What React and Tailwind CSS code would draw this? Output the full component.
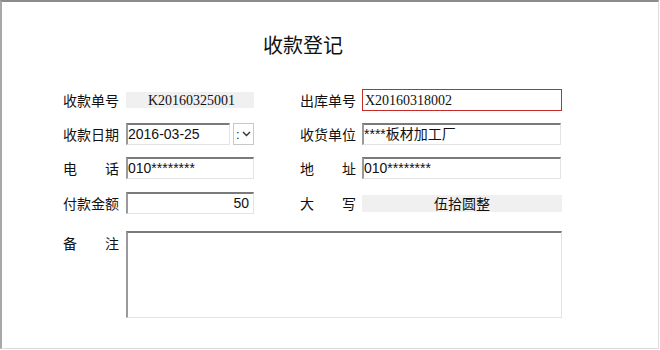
const cjk = { fontFamily: '"Noto Sans CJK SC", "Liberation Sans", sans-serif' }
const serif = { fontFamily: '"Liberation Serif", "Noto Sans CJK SC", serif' }
const sans = { fontFamily: '"Liberation Sans", "Noto Sans CJK SC", sans-serif' }

const sunken = 'border-t-2 border-l-2 border-r border-b border-t-[#7a7a7a] border-l-[#9a9a9a] border-r-[#e3e3e3] border-b-[#e3e3e3] bg-white'

function Label({ children, spread }) {
    return (
        <div className="w-[56px] h-[22px] flex items-center text-[14px] text-[#111] shrink-0" style={cjk}>
            {spread ? (
                <div className="w-full flex justify-between">
                    <span>{children[0]}</span>
                    <span>{children[1]}</span>
                </div>
            ) : children}
        </div>
    )
}

function Input({ value, className = '', right, font = sans }) {
    return (
        <div className={`h-[22px] flex items-center text-[14px] text-[#111] ${sunken} ${right ? 'justify-end pr-[4px]' : ''} ${className}`} style={font}>
            {value}
        </div>
    )
}

export default function App() {
    return (
        <div className="w-[660px] h-[350px] bg-white overflow-hidden">
            <div className="w-[659px] h-[349px] border-t-2 border-l-2 border-t-[#8c8c8c] border-l-[#a8a8a8] border-r border-b border-r-[#dcdcdc] border-b-[#dcdcdc]">
                <div className="pt-[29px] pl-[261px]">
                    <div className="h-[28px] text-[20px] leading-[28px] text-[#111]" style={cjk}>
                        收款登记
                    </div>
                </div>

                <div className="pl-[61px] pt-[30px] flex flex-col">
                    {/* row 1 */}
                    <div className="flex items-center">
                        <Label>收款单号</Label>
                        <div className="ml-[7px] w-[128px] h-[16px] bg-[#f0f0f0] flex items-center pl-[22px] text-[14px] text-[#111]" style={serif}>
                            K20160325001
                        </div>
                        <div className="ml-[46px]"><Label>出库单号</Label></div>
                        <div className="ml-[6px] w-[200px] h-[22px] border border-[#c42b2b] bg-white flex items-center pl-[2px] text-[14px] text-[#111]" style={serif}>
                            X20160318002
                        </div>
                    </div>

                    {/* row 2 */}
                    <div className="flex items-center mt-[12px]">
                        <Label>收款日期</Label>
                        <Input value="2016-03-25" className="ml-[7px] w-[104px]" />
                        <div className="ml-[3px] w-[21px] h-[22px] border border-[#c8c8c8] bg-white flex items-center pl-[2px] gap-[2px] text-[13px] text-[#111]" style={sans}>
                            <span className="leading-none">:</span>
                            <svg width="9" height="6" viewBox="0 0 9 6" fill="none" stroke="#333" strokeWidth="1.4">
                                <path d="M1 1l3.5 3.5L8 1" />
                            </svg>
                        </div>
                        <div className="ml-[46px]"><Label>收货单位</Label></div>
                        <Input value="****板材加工厂" className="ml-[6px] w-[199px]" />
                    </div>

                    {/* row 3 */}
                    <div className="flex items-center mt-[12px]">
                        <Label spread>电话</Label>
                        <Input value="010********" className="ml-[7px] w-[128px]" />
                        <div className="ml-[46px]"><Label spread>地址</Label></div>
                        <Input value="010********" className="ml-[6px] w-[199px]" />
                    </div>

                    {/* row 4 */}
                    <div className="flex items-center mt-[13px]">
                        <Label>付款金额</Label>
                        <Input value="50" right className="ml-[7px] w-[128px]" />
                        <div className="ml-[46px]"><Label spread>大写</Label></div>
                        <div className="ml-[6px] w-[200px] h-[17px] bg-[#f0f0f0] flex items-center justify-center text-[14px] text-[#111]" style={cjk}>
                            伍拾圆整
                        </div>
                    </div>

                    {/* row 5 */}
                    <div className="flex items-start mt-[17px]">
                        <div className="pt-[1px]"><Label spread>备注</Label></div>
                        <div className={`ml-[7px] w-[436px] h-[87px] ${sunken}`} />
                    </div>
                </div>
            </div>
        </div>
    )
}
